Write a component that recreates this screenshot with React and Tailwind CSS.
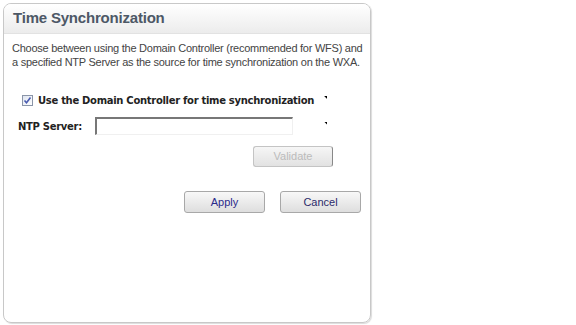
export default function App() {
  return (
    <div className="w-[576px] h-[325px] bg-white pt-[3px] pl-[3px] font-['Liberation_Sans',sans-serif]">
      <div className="w-[368px] h-[320px] border border-[#c8c8c8] rounded-[8px] shadow-[1px_1px_1px_#dcdcdc] overflow-hidden flex flex-col">
        <div className="h-[30px] bg-gradient-to-b from-[#ffffff] to-[#ececec] border-b border-[#e2e2e2] pl-[9px] flex items-center">
          <span className="text-[15px] font-bold text-[#4d5866] tracking-[-0.2px]">Time Synchronization</span>
        </div>
        <p className="px-[8px] pt-[7px] text-[11px] leading-[14px] text-[#444] whitespace-nowrap tracking-[-0.25px]">
          Choose between using the Domain Controller (recommended for WFS) and
          <br />
          a specified NTP Server as the source for time synchronization on the WXA.
        </p>
        <div className="mt-[24px] pl-[18px] flex items-center">
          <span className="w-[11px] h-[11px] border border-[#8a95a8] bg-gradient-to-br from-[#dfe5f0] to-[#ffffff] flex items-center justify-center">
            <svg width="9" height="9" viewBox="0 0 9 9">
              <path d="M1.5 4.5 L3.5 6.8 L7.5 1.5" fill="none" stroke="#4a5cb0" strokeWidth="1.6" />
            </svg>
          </span>
          <span className="ml-[5px] text-[10px] font-bold text-[#222] font-['DejaVu_Sans',sans-serif] tracking-[-0.3px]">Use the Domain Controller for time synchronization</span>
          <span className="ml-[10px] mt-[-6px] w-[3px] h-[3px] bg-black [clip-path:polygon(0_0,100%_0,100%_100%)]"></span>
        </div>
        <div className="mt-[9px] pl-[14px] flex items-center">
          <span className="w-[77px] text-[10px] font-bold text-[#222] font-['DejaVu_Sans',sans-serif] tracking-[-0.3px]">NTP Server:</span>
          <input className="w-[198px] h-[18px] border-t-2 border-l-2 border-r border-b border-t-[#777] border-l-[#777] border-r-[#f0f0f0] border-b-[#f0f0f0] bg-white outline-none" />
          <span className="ml-[31px] mt-[-6px] w-[3px] h-[3px] bg-black [clip-path:polygon(0_0,100%_0,100%_100%)]"></span>
        </div>
        <div className="mt-[11px] pl-[249px] flex">
          <button className="w-[80px] h-[21px] rounded-[3px] border border-[#c4c4c4] border-r-[#888] bg-gradient-to-b from-[#f6f6f6] to-[#e2e2e2] text-[11px] text-[#bbb]">Validate</button>
        </div>
        <div className="mt-[24px] pl-[180px] flex gap-[15px]">
          <button className="w-[81px] h-[22px] rounded-[3px] border border-[#a8a8a8] bg-gradient-to-b from-[#f8f8f8] to-[#dedede] text-[11px] text-[#2a2a8a]">Apply</button>
          <button className="w-[81px] h-[22px] rounded-[3px] border border-[#a8a8a8] bg-gradient-to-b from-[#f8f8f8] to-[#dedede] text-[11px] text-[#2a2a6a]">Cancel</button>
        </div>
      </div>
    </div>
  );
}
